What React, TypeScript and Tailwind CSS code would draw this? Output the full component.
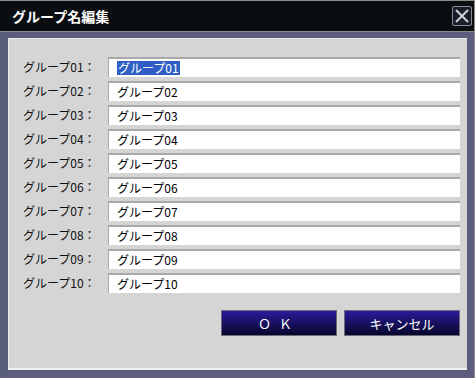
const groups = Array.from({ length: 10 }, (_, i) => `グループ${String(i + 1).padStart(2, "0")}`);

const font = { fontFamily: '"Noto Sans CJK JP", "Noto Sans", sans-serif' };

export default function App() {
  return (
    <div
      className="flex h-[378px] w-[475px] flex-col border-t border-r border-[#8c8c8c] bg-[#5a5d7b]"
      style={font}
    >
      {/* Title bar */}
      <div className="flex h-[31px] items-center justify-between border-b border-[#8c8c8c] bg-[#0b0e11] pl-[12px] pr-[2px]">
        <span className="text-[14px] font-bold leading-none text-white">グループ名編集</span>
        <button className="flex h-[20px] w-[20px] items-center justify-center rounded-[2px] border border-[#8a8a9a] bg-[#1a1d2a]">
          <svg width="16" height="16" viewBox="0 0 16 16">
            <path d="M2 2L14 14M14 2L2 14" stroke="#d0d0d0" strokeWidth="2" />
          </svg>
        </button>
      </div>

      {/* Panel */}
      <div className="mt-[6px] mr-[7px] ml-[8px] flex h-[332px] flex-col border-t border-l border-[#ececec] border-b-2 border-b-[#f0f0f0] bg-[#d5d5d5] pt-[18px] pr-[7px] pl-[14px]">
        {groups.map((name, i) => (
          <div key={name} className="mb-[4px] flex h-[20px] items-center">
            <span className="w-[85px] text-[12px] leading-none text-[#111]">{name}：</span>
            <div className="flex h-[20px] flex-1 items-center border-t-2 border-l border-[#a8a8a8] bg-white pl-[8px] text-[12px] leading-none text-black">
              {i === 0 ? (
                <span className="bg-[#2f5fc4] px-[1px] py-[1px] text-white">{name}</span>
              ) : (
                <span>{name}</span>
              )}
            </div>
          </div>
        ))}

        <div className="mt-[13px] flex justify-end gap-[7px]">
          <button className="h-[26px] w-[116px] border border-[#6a6a78] bg-gradient-to-b from-[#2c1a9c] to-[#07072c] text-[13px] leading-none tracking-[8px] text-white">
            ＯＫ
          </button>
          <button className="h-[26px] w-[116px] border border-[#6a6a78] bg-gradient-to-b from-[#2c1a9c] to-[#07072c] text-[13px] leading-none text-white">
            キャンセル
          </button>
        </div>
      </div>
    </div>
  );
}
